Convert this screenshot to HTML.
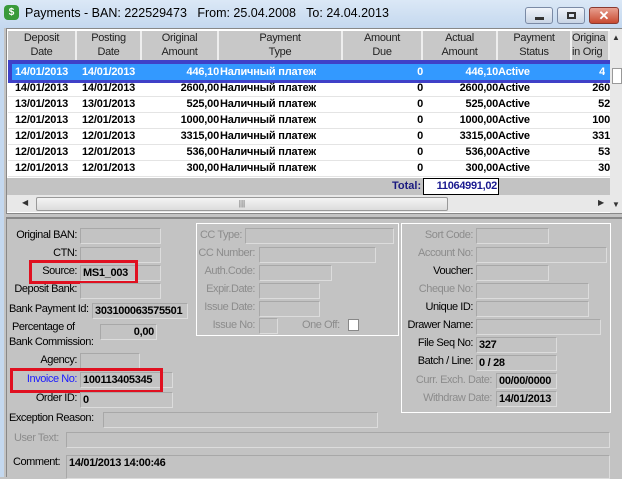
<!DOCTYPE html>
<html><head><style>
*{margin:0;padding:0;box-sizing:border-box}
body{width:622px;height:477px;overflow:hidden;background:#c3c3c3;font-family:"Liberation Sans",sans-serif;font-size:11.5px;position:relative;color:#000}
div{position:absolute}
.t{white-space:nowrap;font-size:11px;letter-spacing:-0.45px}
.r{text-align:right}
.b{background:#c3c3c3;border:1px solid #dcdcdc;border-top-color:#a8a8a8;border-left-color:#a8a8a8}
.g{color:#8c8c8c}
.v{font-weight:bold;font-size:11px;line-height:15px;padding-left:2px;letter-spacing:-0.3px;white-space:nowrap}
.h{top:31px;height:29px;text-align:center;line-height:14px;font-size:11px;letter-spacing:-0.3px;color:#222;border-right:2px solid #eee;background:#c8c8c8}
.cell{height:16px;line-height:16px;font-weight:bold;font-size:11px;white-space:nowrap;overflow:hidden;letter-spacing:-0.2px}
.red{border:3px solid #e01020}
</style></head><body>
<div style="left:0;top:0;width:622px;height:28px;background:linear-gradient(#dbe8f6,#c4d8ef)"></div>
<div style="left:4px;top:5px;width:15px;height:15px;background:#3a9a3a;border-radius:4px;color:#fff;font-size:10px;font-weight:bold;text-align:center;line-height:15px">$</div>
<div style="left:25px;top:6px;font-size:12.5px;color:#000;white-space:nowrap">Payments - BAN: 222529473&nbsp;&nbsp; From: 25.04.2008&nbsp;&nbsp; To: 24.04.2013</div>
<div style="left:525px;top:7px;width:28px;height:17px;border:1px solid #7a8aa5;border-radius:3px;background:linear-gradient(#f0f4fa,#c8d4e4)"><div style="left:9px;top:9px;width:9px;height:3px;background:#333"></div></div>
<div style="left:557px;top:7px;width:28px;height:17px;border:1px solid #7a8aa5;border-radius:3px;background:linear-gradient(#f0f4fa,#c8d4e4)"><div style="left:9px;top:4px;width:9px;height:7px;border:2px solid #333"></div></div>
<div style="left:589px;top:7px;width:30px;height:17px;border:1px solid #8a3a30;border-radius:3px;background:linear-gradient(#e8a090,#c84a30);color:#fff;font-weight:bold;text-align:center;line-height:15px;font-size:13px">✕</div>
<div style="left:0;top:28px;width:4px;height:449px;background:#c4d8ef"></div>
<div style="left:6px;top:28px;width:616px;height:186px;background:#fff;border:1px solid #888"></div>
<div class="h" style="left:8px;width:69px">Deposit<br>Date</div>
<div class="h" style="left:77px;width:65px">Posting<br>Date</div>
<div class="h" style="left:142px;width:77px">Original<br>Amount</div>
<div class="h" style="left:219px;width:124px">Payment<br>Type</div>
<div class="h" style="left:343px;width:80px">Amount<br>Due</div>
<div class="h" style="left:423px;width:75px">Actual<br>Amount</div>
<div class="h" style="left:498px;width:74px">Payment<br>Status</div>
<div class="h" style="left:572px;width:38px;text-align:left;overflow:hidden">Origina<br>in Orig</div>
<div style="left:610px;top:29px;width:12px;height:184px;background:#e8e8e8"></div>
<div style="left:612px;top:33px;font-size:8px;color:#333">▲</div>
<div style="left:612px;top:68px;width:10px;height:16px;background:#fff;border:1px solid #999"></div>
<div style="left:612px;top:200px;font-size:8px;color:#333">▼</div>
<div style="left:8px;top:60px;width:602px;height:23px;background:#3f40c8"></div>
<div style="left:12px;top:64px;width:598px;height:16px;background:#3399ff"></div>
<div style="left:8px;top:64px;width:602px;color:#fff">
<div class="cell" style="left:7px;top:0">14/01/2013</div><div class="cell" style="left:74px;top:0">14/01/2013</div><div class="cell r" style="left:134px;width:77px;top:0">446,10</div><div class="cell" style="left:212px;top:0">Наличный платеж</div><div class="cell r" style="left:335px;width:80px;top:0">0</div><div class="cell r" style="left:415px;width:75px;top:0">446,10</div><div class="cell" style="left:490px;top:0">Active</div><div class="cell r" style="left:564px;width:33px;top:0">4</div>
</div>
<div style="left:8px;top:80px;width:602px">
<div class="cell" style="left:7px;top:0">14/01/2013</div><div class="cell" style="left:74px;top:0">14/01/2013</div><div class="cell r" style="left:134px;width:77px;top:0">2600,00</div><div class="cell" style="left:212px;top:0">Наличный платеж</div><div class="cell r" style="left:335px;width:80px;top:0">0</div><div class="cell r" style="left:415px;width:75px;top:0">2600,00</div><div class="cell" style="left:490px;top:0">Active</div><div class="cell r" style="left:564px;width:38px;top:0">260</div>
<div class="cell" style="left:7px;top:16px">13/01/2013</div><div class="cell" style="left:74px;top:16px">13/01/2013</div><div class="cell r" style="left:134px;width:77px;top:16px">525,00</div><div class="cell" style="left:212px;top:16px">Наличный платеж</div><div class="cell r" style="left:335px;width:80px;top:16px">0</div><div class="cell r" style="left:415px;width:75px;top:16px">525,00</div><div class="cell" style="left:490px;top:16px">Active</div><div class="cell r" style="left:564px;width:38px;top:16px">52</div>
<div class="cell" style="left:7px;top:32px">12/01/2013</div><div class="cell" style="left:74px;top:32px">12/01/2013</div><div class="cell r" style="left:134px;width:77px;top:32px">1000,00</div><div class="cell" style="left:212px;top:32px">Наличный платеж</div><div class="cell r" style="left:335px;width:80px;top:32px">0</div><div class="cell r" style="left:415px;width:75px;top:32px">1000,00</div><div class="cell" style="left:490px;top:32px">Active</div><div class="cell r" style="left:564px;width:38px;top:32px">100</div>
<div class="cell" style="left:7px;top:48px">12/01/2013</div><div class="cell" style="left:74px;top:48px">12/01/2013</div><div class="cell r" style="left:134px;width:77px;top:48px">3315,00</div><div class="cell" style="left:212px;top:48px">Наличный платеж</div><div class="cell r" style="left:335px;width:80px;top:48px">0</div><div class="cell r" style="left:415px;width:75px;top:48px">3315,00</div><div class="cell" style="left:490px;top:48px">Active</div><div class="cell r" style="left:564px;width:38px;top:48px">331</div>
<div class="cell" style="left:7px;top:64px">12/01/2013</div><div class="cell" style="left:74px;top:64px">12/01/2013</div><div class="cell r" style="left:134px;width:77px;top:64px">536,00</div><div class="cell" style="left:212px;top:64px">Наличный платеж</div><div class="cell r" style="left:335px;width:80px;top:64px">0</div><div class="cell r" style="left:415px;width:75px;top:64px">536,00</div><div class="cell" style="left:490px;top:64px">Active</div><div class="cell r" style="left:564px;width:38px;top:64px">53</div>
<div class="cell" style="left:7px;top:80px">12/01/2013</div><div class="cell" style="left:74px;top:80px">12/01/2013</div><div class="cell r" style="left:134px;width:77px;top:80px">300,00</div><div class="cell" style="left:212px;top:80px">Наличный платеж</div><div class="cell r" style="left:335px;width:80px;top:80px">0</div><div class="cell r" style="left:415px;width:75px;top:80px">300,00</div><div class="cell" style="left:490px;top:80px">Active</div><div class="cell r" style="left:564px;width:38px;top:80px">30</div>
</div>
<div style="left:8px;top:96px;width:602px;height:1px;background:#e4e4e4"></div>
<div style="left:8px;top:112px;width:602px;height:1px;background:#e4e4e4"></div>
<div style="left:8px;top:128px;width:602px;height:1px;background:#e4e4e4"></div>
<div style="left:8px;top:144px;width:602px;height:1px;background:#e4e4e4"></div>
<div style="left:8px;top:160px;width:602px;height:1px;background:#e4e4e4"></div>
<div style="left:8px;top:176px;width:602px;height:1px;background:#e4e4e4"></div>
<div style="left:7px;top:178px;width:603px;height:17px;background:#c3c3c3"></div>
<div style="left:392px;top:180px;color:#1a1a80;font-weight:bold;font-size:11px">Total:</div>
<div style="left:423px;top:178px;width:76px;height:17px;background:#fff;border:1px solid #000;color:#1a1a90;font-weight:bold;font-size:11px;text-align:right;line-height:15px;padding-right:1px;letter-spacing:-0.3px">11064991,02</div>
<div style="left:7px;top:195px;width:603px;height:17px;background:#e8e8e8"></div>
<div style="left:22px;top:198px;font-size:8px;color:#333">◀</div>
<div style="left:36px;top:197px;width:412px;height:14px;background:linear-gradient(#f4f4f4,#dcdcdc);border:1px solid #999;border-radius:2px;text-align:center;font-size:8px;line-height:12px;color:#555">|||</div>
<div style="left:598px;top:198px;font-size:8px;color:#333">▶</div>
<div style="left:6px;top:217px;width:616px;height:260px;border-top:2px solid #888;border-left:1px solid #888"></div>
<div class="t r" style="right:545px;top:229px">Original BAN:</div><div class="b" style="left:80px;top:228px;width:81px;height:16px"></div>
<div class="t r" style="right:545px;top:247px">CTN:</div><div class="b" style="left:80px;top:247px;width:81px;height:16px"></div>
<div class="t r" style="right:545px;top:265px">Source:</div><div class="b v" style="left:80px;top:265px;width:81px;height:16px">MS1_003</div>
<div class="red" style="left:29px;top:260px;width:109px;height:24px"></div>
<div class="t r" style="right:545px;top:283px">Deposit Bank:</div><div class="b" style="left:80px;top:283px;width:81px;height:16px"></div>
<div class="t" style="left:9px;top:303px">Bank Payment Id:</div><div class="b v" style="left:92px;top:303px;width:96px;height:16px">303100063575501</div>
<div class="t" style="left:12px;top:321px">Percentage of</div>
<div class="t" style="left:9px;top:336px">Bank Commission:</div><div class="b v r" style="left:100px;top:324px;width:57px;height:16px;padding-right:2px">0,00</div>
<div class="t r" style="right:545px;top:354px">Agency:</div><div class="b" style="left:80px;top:353px;width:60px;height:16px"></div>
<div class="t r" style="right:545px;top:373px;color:#1a1aff">Invoice No:</div><div class="b v" style="left:80px;top:372px;width:93px;height:16px">100113405345</div>
<div class="red" style="left:10px;top:368px;width:153px;height:25px"></div>
<div class="t r" style="right:545px;top:392px">Order ID:</div><div class="b v" style="left:80px;top:392px;width:93px;height:16px">0</div>
<div class="t" style="left:9px;top:412px">Exception Reason:</div><div class="b" style="left:103px;top:412px;width:275px;height:16px"></div>
<div class="t g" style="left:14px;top:432px">User Text:</div><div class="b" style="left:66px;top:432px;width:544px;height:16px"></div>
<div class="t" style="left:13px;top:456px">Comment:</div><div class="b v" style="left:66px;top:455px;width:544px;height:24px">14/01/2013 14:00:46</div>
<div style="left:196px;top:223px;width:203px;height:113px;border:1px solid #fff"></div>
<div class="t r g" style="right:380px;top:229px">CC Type:</div><div class="b" style="left:245px;top:228px;width:149px;height:16px"></div>
<div class="t r g" style="right:367px;top:247px">CC Number:</div><div class="b" style="left:259px;top:247px;width:117px;height:16px"></div>
<div class="t r g" style="right:367px;top:265px">Auth.Code:</div><div class="b" style="left:259px;top:265px;width:73px;height:16px"></div>
<div class="t r g" style="right:367px;top:283px">Expir.Date:</div><div class="b" style="left:259px;top:283px;width:61px;height:16px"></div>
<div class="t r g" style="right:367px;top:301px">Issue Date:</div><div class="b" style="left:259px;top:301px;width:61px;height:16px"></div>
<div class="t r g" style="right:367px;top:319px">Issue No:</div><div class="b" style="left:259px;top:318px;width:19px;height:16px"></div>
<div class="t g" style="left:302px;top:319px">One Off:</div><div style="left:348px;top:319px;width:11px;height:12px;background:#fff;border:1px solid #888"></div>
<div style="left:401px;top:223px;width:210px;height:190px;border:1px solid #fff"></div>
<div class="t r g" style="right:149px;top:229px">Sort Code:</div><div class="b" style="left:476px;top:228px;width:73px;height:16px"></div>
<div class="t r g" style="right:149px;top:247px">Account No:</div><div class="b" style="left:476px;top:247px;width:131px;height:16px"></div>
<div class="t r" style="right:149px;top:265px">Voucher:</div><div class="b" style="left:476px;top:265px;width:73px;height:16px"></div>
<div class="t r g" style="right:149px;top:283px">Cheque No:</div><div class="b" style="left:476px;top:283px;width:113px;height:16px"></div>
<div class="t r" style="right:149px;top:301px">Unique ID:</div><div class="b" style="left:476px;top:301px;width:113px;height:16px"></div>
<div class="t r" style="right:149px;top:319px">Drawer Name:</div><div class="b" style="left:476px;top:319px;width:125px;height:16px"></div>
<div class="t r" style="right:149px;top:337px">File Seq No:</div><div class="b v" style="left:476px;top:337px;width:81px;height:16px">327</div>
<div class="t r" style="right:149px;top:355px">Batch / Line:</div><div class="b v" style="left:476px;top:355px;width:81px;height:16px">0 / 28</div>
<div class="t r g" style="right:130px;top:374px">Curr. Exch. Date:</div><div class="b v" style="left:496px;top:373px;width:61px;height:16px">00/00/0000</div>
<div class="t r g" style="right:130px;top:392px">Withdraw Date:</div><div class="b v" style="left:496px;top:391px;width:61px;height:16px">14/01/2013</div>
</body></html>
